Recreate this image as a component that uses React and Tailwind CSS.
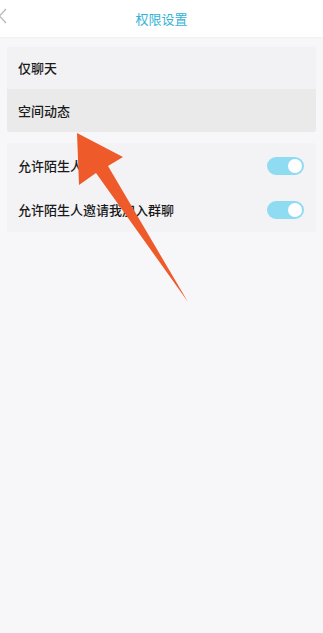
import React from 'react';

const font = { fontFamily: '"Noto Sans CJK SC", "Noto Sans", sans-serif' };

const Toggle = () => (
  <div className="w-[37px] h-[18px] rounded-full bg-[#8fdcf2] flex items-center justify-end pr-[2px]">
    <div className="w-[14px] h-[14px] rounded-full bg-white" />
  </div>
);

const App = () => {
  return (
    <div className="relative w-[323px] h-[633px] bg-[#f7f7fa] overflow-hidden" style={font}>
      {/* header */}
      <div className="relative h-[37px] bg-white flex items-center justify-center shadow-[0_1px_2px_rgba(0,0,0,0.03)]">
        <svg className="absolute left-[-2px] top-[8px]" width="10" height="16" viewBox="0 0 10 16">
          <path d="M8 1 L1.5 8 L8 15" fill="none" stroke="#b5b5b5" strokeWidth="1.2" />
        </svg>
        <span className="text-[13px] text-[#33b3d6] leading-none">权限设置</span>
      </div>

      <div className="px-[7px] pt-[10px] flex flex-col gap-[11px]">
        <div className="rounded-[3px] bg-[#f2f2f4] overflow-hidden">
          <div className="h-[42px] flex items-center px-[11px] text-[13px] font-medium text-[#1a1a1a]">仅聊天</div>
          <div className="h-[43px] flex items-center px-[11px] text-[13px] font-medium text-[#1a1a1a] bg-[#eaeaea]">空间动态</div>
        </div>
        <div className="rounded-[3px] bg-[#f3f3f5]">
          <div className="h-[45px] flex items-center justify-between pl-[11px] pr-[9px] text-[13px] font-medium text-[#1a1a1a]">
            <span>允许陌生人查看</span>
            <div className="mr-[3px]"><Toggle /></div>
          </div>
          <div className="h-[44px] flex items-center justify-between pl-[11px] pr-[9px] text-[13px] font-medium text-[#1a1a1a]">
            <span>允许陌生人邀请我加入群聊</span>
            <div className="mr-[3px]"><Toggle /></div>
          </div>
        </div>
      </div>

      {/* annotation arrow */}
      <svg className="absolute left-0 top-0 pointer-events-none" width="323" height="633" viewBox="0 0 323 633">
        <polygon
          points="77,133 123,157 108,166 188,302 96,173 79,185"
          fill="#ee5a2a"
        />
      </svg>
    </div>
  );
};

export default App;
